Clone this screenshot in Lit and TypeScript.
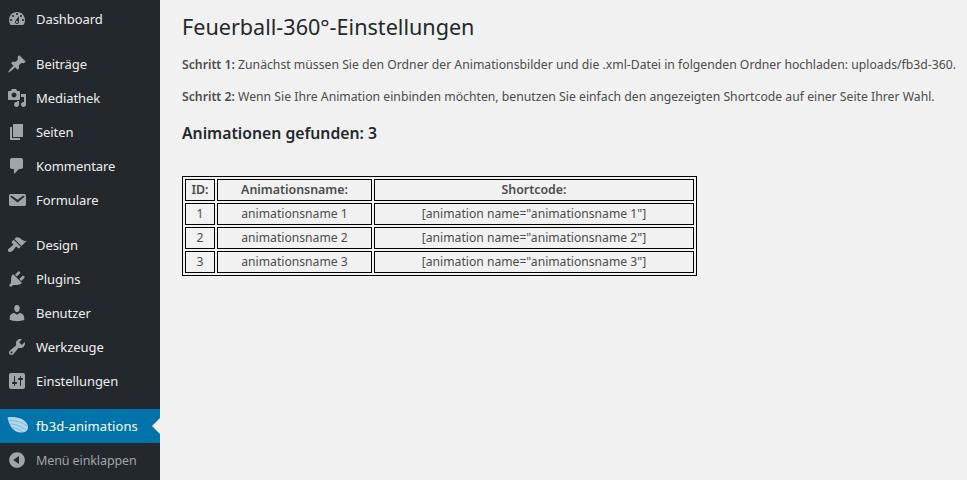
import { LitElement, html, css, svg } from "lit";
import { customElement } from "lit/decorators.js";

const ICONS: Record<string, string> = {
  dashboard: "M3.76 16h12.48c1.1-1.37 1.76-3.11 1.76-5 0-4.42-3.58-8-8-8s-8 3.58-8 8c0 1.89.66 3.63 1.76 5zM10 4c.55 0 1 .45 1 1s-.45 1-1 1-1-.45-1-1 .45-1 1-1zM6 6c.55 0 1 .45 1 1s-.45 1-1 1-1-.45-1-1 .45-1 1-1zm8 0c.55 0 1 .45 1 1s-.45 1-1 1-1-.45-1-1 .45-1 1-1zm-5.37 5.55L12 7v6c0 1.1-.9 2-2 2s-2-.9-2-2c0-.57.24-1.08.63-1.45zM4 10c.55 0 1 .45 1 1s-.45 1-1 1-1-.45-1-1 .45-1 1-1zm12 0c.55 0 1 .45 1 1s-.45 1-1 1-1-.45-1-1 .45-1 1-1zm-5 3c0-.55-.45-1-1-1s-1 .45-1 1 .45 1 1 1 1-.45 1-1z",
  pin: "M10.44 3.02l1.82-1.82 6.36 6.35-1.83 1.82c-1.05-.68-2.48-.57-3.41.36l-.75.75c-.92.93-1.04 2.35-.35 3.41l-1.83 1.82-2.41-2.41-2.8 2.79c-.42.42-3.38 2.71-3.8 2.29s1.86-3.39 2.28-3.81l2.79-2.79L4.1 9.36l1.83-1.82c1.05.69 2.48.57 3.4-.36l.75-.75c.93-.92 1.05-2.35.36-3.41z",
  media: "M13 11V4c0-.55-.45-1-1-1h-1.67L9 1H5L3.67 3H2c-.55 0-1 .45-1 1v7c0 .55.45 1 1 1h10c.55 0 1-.45 1-1zM7 4.5c1.38 0 2.5 1.12 2.5 2.5S8.38 9.5 7 9.5 4.5 8.38 4.5 7 5.62 4.5 7 4.5zM14 6h5v10.5c0 1.38-1.12 2.5-2.5 2.5S14 17.88 14 16.5s1.12-2.5 2.5-2.5c.17 0 .34.02.5.05V9h-3V6zm-4 8.05V13h2v3.5c0 1.38-1.12 2.5-2.5 2.5S7 17.88 7 16.5 8.12 14 9.5 14c.17 0 .34.02.5.05z",
  page: "M6 15V2h10v13H6zm-1 1h8v2H3V5h2v11z",
  comments: "M5 2h9c1.1 0 2 .9 2 2v7c0 1.1-.9 2-2 2h-2l-5 5v-5H5c-1.1 0-2-.9-2-2V4c0-1.1.9-2 2-2z",
  email: "M3.87 4h13.25C18.37 4 19 4.59 19 5.79v8.42c0 1.19-.63 1.79-1.88 1.79H3.87c-1.25 0-1.88-.6-1.88-1.79V5.79c0-1.2.63-1.79 1.88-1.79zm6.62 8.6l6.74-5.53c.24-.2.43-.66.13-1.07-.29-.41-.82-.42-1.17-.17l-5.7 3.86L4.8 5.83c-.35-.25-.88-.24-1.17.17-.3.41-.11.87.13 1.07z",
  appearance: "M14.48 11.06L7.41 3.99l1.5-1.5c.5-.56 2.3-.47 3.51.32 1.21.8 1.43 1.28 2.91 2.1 1.18.64 2.45 1.26 4.45.85zm-.71.71L6.7 4.7 4.93 6.47c-.39.39-.39 1.02 0 1.41l1.06 1.06c.39.39.39 1.03 0 1.42-.6.6-1.43 1.11-2.21 1.69-.35.26-.7.53-1.01.84C1.43 13.23.28 15.44 1.43 16.59c1.15 1.15 3.35.01 4.68-1.33.31-.31.58-.66.84-1.01.58-.78 1.09-1.61 1.69-2.21.39-.39 1.03-.39 1.42 0l1.06 1.06c.39.39 1.02.39 1.41 0z",
  plugins: "M13.11 4.36L9.87 7.6 8 5.73l3.24-3.24c.35-.34 1.05-.2 1.56.32.52.51.66 1.21.31 1.55zm-8 1.77l.91-1.12 9.01 9.01-1.19.84c-.71.71-2.63 1.16-3.82 1.16H6.14L4.9 17.26c-.59.59-1.54.59-2.12 0-.59-.58-.59-1.53 0-2.12l1.24-1.24v-3.88c0-1.13.4-3.19 1.09-3.89zm7.26 3.97l3.24-3.24c.34-.35 1.04-.21 1.55.31.52.51.66 1.21.31 1.55l-3.24 3.25z",
  users: "M10 9.25c-2.27 0-2.73-3.44-2.73-3.44C7 4.02 7.82 2 9.97 2c2.16 0 2.98 2.02 2.71 3.81 0 0-.41 3.44-2.68 3.44zm0 2.57L12.72 10c2.39 0 4.52 2.33 4.52 4.53v2.49s-3.65 1.13-7.24 1.13c-3.65 0-7.24-1.13-7.24-1.13v-2.49c0-2.25 1.94-4.48 4.47-4.48z",
  tools: "M16.68 9.77c-1.34 1.34-3.3 1.67-4.95.99l-5.41 6.52c-.99.99-2.59.99-3.58 0s-.99-2.59 0-3.57l6.52-5.42c-.68-1.65-.35-3.61.99-4.95 1.28-1.28 3.12-1.62 4.72-1.06l-2.89 2.89 2.82 2.82 2.86-2.87c.53 1.58.18 3.39-1.08 4.67zM3.81 16.21c.4.39 1.04.39 1.43 0 .4-.4.4-1.04 0-1.43-.39-.4-1.03-.4-1.43 0-.39.39-.39 1.03 0 1.43z",
  settings: "M18 16V4c0-1.1-.9-2-2-2H4c-1.1 0-2 .9-2 2v12c0 1.1.9 2 2 2h12c1.1 0 2-.9 2-2zM8 11h1c.55 0 1 .45 1 1s-.45 1-1 1H8v1.5c0 .28-.22.5-.5.5s-.5-.22-.5-.5V13H6c-.55 0-1-.45-1-1s.45-1 1-1h1V5.5c0-.28.22-.5.5-.5s.5.22.5.5V11zm5-2h-1c-.55 0-1-.45-1-1s.45-1 1-1h1V5.5c0-.28.22-.5.5-.5s.5.22.5.5V7h1c.55 0 1 .45 1 1s-.45 1-1 1h-1v5.5c0 .28-.22.5-.5.5s-.5-.22-.5-.5V9z",
  collapse: "M10 2.16c4.33 0 7.84 3.51 7.84 7.84s-3.51 7.84-7.84 7.84S2.16 14.33 2.16 10 5.71 2.16 10 2.16zm2 11.72V6.12L6.18 9.97z",
};

const GROUPS: { icon: string; label: string }[][] = [
  [{ icon: "dashboard", label: "Dashboard" }],
  [
    { icon: "pin", label: "Beiträge" },
    { icon: "media", label: "Mediathek" },
    { icon: "page", label: "Seiten" },
    { icon: "comments", label: "Kommentare" },
    { icon: "email", label: "Formulare" },
  ],
  [
    { icon: "appearance", label: "Design" },
    { icon: "plugins", label: "Plugins" },
    { icon: "users", label: "Benutzer" },
    { icon: "tools", label: "Werkzeuge" },
    { icon: "settings", label: "Einstellungen" },
  ],
];

const ROWS = [1, 2, 3];

@customElement("app-root")
export class AppRoot extends LitElement {
  static styles = css`
    :host {
      display: flex;
      width: 967px;
      height: 480px;
      overflow: hidden;
      background: #f1f1f1;
      font-family: "Noto Sans", "Open Sans", sans-serif;
      font-size: 13px;
      color: #4c4c4c;
    }
    .side {
      flex: none;
      width: 160px;
      background: #23282d;
      padding-top: 2px;
      box-sizing: border-box;
      color: #eee;
    }
    .group {
      margin-bottom: 11px;
    }
    .item {
      position: relative;
      display: flex;
      align-items: center;
      height: 34px;
      font-size: 13px;
      letter-spacing: -0.07px;
    }
    .icon {
      flex: none;
      width: 20px;
      height: 20px;
      margin: 0 9px 0 7px;
      fill: #a0a5aa;
    }
    .item.active {
      background: #0073aa;
      color: #fff;
      letter-spacing: 0.1px;
    }
    .item.active::after {
      content: "";
      position: absolute;
      right: 0;
      top: 9px;
      border: 8px solid transparent;
      border-right-color: #f1f1f1;
      border-left-width: 0;
    }
    .logo {
      flex: none;
      width: 24px;
      height: 20px;
      margin: 0 7px 0 5px;
    }
    .item.collapse {
      color: #a0a5aa;
      font-size: 12.5px;
      letter-spacing: -0.1px;
    }
    .main {
      flex: 1;
      min-width: 0;
      padding: 12px 0 0 22px;
      box-sizing: border-box;
    }
    h1 {
      margin: 0;
      font-weight: 400;
      font-size: 21.6px;
      line-height: 29px;
      color: #23282d;
    }
    p {
      margin: 14px 0 0;
      font-size: 12.23px;
      line-height: 18px;
      white-space: nowrap;
    }
    p.first {
      margin-top: 15px;
    }
    b {
      font-weight: 600;
    }
    h2 {
      margin: 15px 0 0;
      font-size: 15.75px;
      line-height: 24px;
      font-weight: 600;
      color: #23282d;
    }
    table {
      margin-top: 31px;
      width: 515px;
      border: 1px solid #000;
      border-spacing: 2px;
      font-size: 12.15px;
      table-layout: fixed;
    }
    th,
    td {
      border: 1px solid #000;
      padding: 0;
      height: 22px;
      line-height: 18px;
      text-align: center;
      box-sizing: border-box;
    }
    th {
      font-weight: 600;
      font-size: 12.4px;
    }
    .c1 { width: 30px; }
    .c2 { width: 155px; }
  `;

  private icon(name: string) {
    return html`<svg class="icon" viewBox="0 0 20 20"><path d=${ICONS[name]}></path></svg>`;
  }

  render() {
    return html`
      <nav class="side">
        ${GROUPS.map(
          (g) => html`<div class="group">
            ${g.map((i) => html`<div class="item">${this.icon(i.icon)}<span>${i.label}</span></div>`)}
          </div>`
        )}
        <div class="item active">
          <svg class="logo" viewBox="0 0 24 20">
            ${svg`<path fill="#b0d6ea" d="M2.500 1.500c5-1 11-.5 16 2.500 3 2 5 5 4.500 8-.5 3.500-4 5-8 4.500C8 16 4 9 2.500 1.500z"></path>
            <path fill="none" stroke="#6fb0d3" stroke-width=".8" d="M3.500 4.500c6-.5 13 1.500 19 6M5 8c5 0 11 2 16.500 6.500M7.500 11.500c4 .5 7.500 2 10.500 4.500"></path>`}
          </svg>
          <span>fb3d-animations</span>
        </div>
        <div class="item collapse">${this.icon("collapse")}<span>Menü einklappen</span></div>
      </nav>
      <main class="main">
        <h1>Feuerball-360°-Einstellungen</h1>
        <p class="first"><b>Schritt 1:</b> Zunächst müssen Sie den Ordner der Animationsbilder und die .xml-Datei in folgenden Ordner hochladen: uploads/fb3d-360.</p>
        <p><b>Schritt 2:</b> Wenn Sie Ihre Animation einbinden möchten, benutzen Sie einfach den angezeigten Shortcode auf einer Seite Ihrer Wahl.</p>
        <h2>Animationen gefunden: 3</h2>
        <table>
          <colgroup><col class="c1" /><col class="c2" /><col /></colgroup>
          <thead>
            <tr><th>ID:</th><th>Animationsname:</th><th>Shortcode:</th></tr>
          </thead>
          <tbody>
            ${ROWS.map(
              (n) => html`<tr>
                <td>${n}</td>
                <td>animationsname ${n}</td>
                <td>[animation name="animationsname ${n}"]</td>
              </tr>`
            )}
          </tbody>
        </table>
      </main>
    `;
  }
}
